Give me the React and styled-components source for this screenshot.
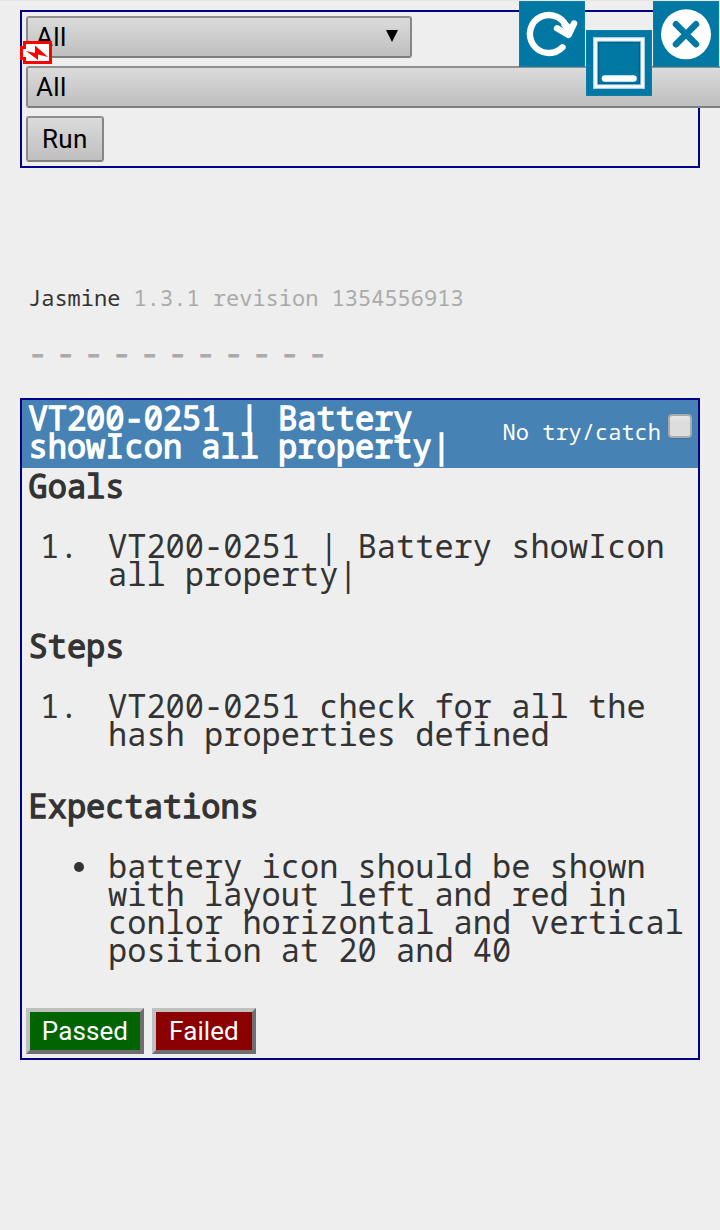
import React from 'react';
import styled, { createGlobalStyle } from 'styled-components';

const mono = `'Droid Sans Mono', 'Noto Sans Mono', 'DejaVu Sans Mono', monospace`;

const GlobalStyle = createGlobalStyle`
  body { margin: 0; background: #eee; color: #333; overflow: hidden; }
  * { box-sizing: border-box; }
`;

const Page = styled.main`
  position: relative;
  width: 720px;
  height: 1230px;
  padding: 9px 20px 0;
  overflow: hidden;
  font-family: ${mono};
  border-top: 1px solid #e6e6e6;
`;

const Panel = styled.section`
  border: 2px solid #00008b;
`;

const Filters = styled(Panel)`
  display: flex;
  flex-direction: column;
  align-items: flex-start;
  gap: 8px;
  height: 158px;
  padding: 4px;
`;

const Control = styled.button`
  display: flex;
  flex: none;
  align-items: center;
  font: 26px/30px Roboto, sans-serif;
  letter-spacing: 0.3px;
  color: #000;
  border: 2px solid;
  border-color: #8f8f8f #868686 #7e7e7e #8a8a8a;
  border-radius: 3px;
  background: linear-gradient(#dbdbdb, #bfbfbf);
`;

const SelectBox = styled(Control)`
  justify-content: space-between;
  width: ${(p) => p.$width}px;
  height: 42px;
  padding: 0 12px 0 8px;
`;

const Arrow = styled.svg`
  margin-top: -2px;
`;

const RunButton = styled(Control)`
  width: 78px;
  height: 46px;
  padding: 0 14px;
`;

const Battery = styled.svg`
  position: absolute;
  left: 20px;
  top: 39px;
`;

const WindowButton = styled.svg`
  position: absolute;
  left: ${(p) => p.$left}px;
  top: ${(p) => p.$top}px;
  width: 66px;
  height: 66px;
  background: #0078a3;
  box-shadow: inset 0 0 2px #2b8cb0;
`;

const Banner = styled.div`
  margin: 115px 0 0 8px;
  font-size: 22px;
  line-height: 28px;
  white-space: pre;
`;

const Version = styled.span`
  color: #aaa;
`;

const Pending = styled.ul`
  display: flex;
  list-style: none;
  margin: 28px 0 0 8px;
  padding: 0;
  height: 28px;
  color: #aaa;
  font-size: 32px;
  line-height: 28px;
  -webkit-text-stroke: 0.9px currentColor;
`;

const PendingItem = styled.li`
  width: 28px;
`;

const Report = styled(Panel)`
  margin-top: 31px;
  height: 662px;
  font-size: 32px;
  line-height: 28px;
`;

const Header = styled.header`
  display: flex;
  justify-content: space-between;
  height: 68px;
  padding: 4px 6px 0;
  background: #4682b4;
  color: #fff;
`;

const Title = styled.div`
  -webkit-text-stroke: 1.3px currentColor;
  white-space: nowrap;
  padding-left: 0.5px;
`;

const TryCatch = styled.label`
  display: flex;
  gap: 7px;
  padding-top: 10px;
  font-size: 22px;
  line-height: 34px;
  white-space: nowrap;
`;

const Check = styled.span`
  width: 24px;
  height: 24px;
  border: 2px solid #aaa;
  border-radius: 4px;
  background: linear-gradient(#e8e8e8, #dcdcdc 35%, #dedede);
  box-shadow: 0 1px 1px #3c74a3;
`;

const Heading = styled.h2`
  margin: 0 0 0 6.5px;
  padding-top: 4px;
  height: 64px;
  font-size: inherit;
  font-weight: normal;
  -webkit-text-stroke: 1.3px currentColor;
`;

const Item = styled.div`
  display: flex;
  height: ${(p) => p.$height}px;
  padding-left: ${(p) => p.$indent}px;
  white-space: pre;
`;

const Marker = styled.span`
  flex: none;
  width: ${(p) => p.$width}px;
`;

const Dot = styled(Marker)`
  &::before {
    content: '';
    display: block;
    width: 10px;
    height: 10px;
    margin-top: 10px;
    border-radius: 50%;
    background: #333;
  }
`;

const Actions = styled.div`
  display: flex;
  gap: 8px;
  padding-left: 4px;
`;

const Verdict = styled.button`
  height: 46px;
  width: ${(p) => p.$width}px;
  padding: 0;
  border: 4px solid;
  border-color: #c0c0c0 #6f6f6f #6f6f6f #c0c0c0;
  background: ${(p) => p.$color};
  color: #fff;
  font: 26px/30px Roboto, sans-serif;
  letter-spacing: 0.1px;
`;

export default function App() {
  return (
    <Page>
      <GlobalStyle />
      <Filters>
        <SelectBox $width={386}>
          <span>All</span>
          <Arrow width="12" height="12"><path d="M0 0H12L6 12Z" /></Arrow>
        </SelectBox>
        <SelectBox $width={760}>All</SelectBox>
        <RunButton>Run</RunButton>
      </Filters>

      <Banner>Jasmine <Version>1.3.1 revision 1354556913</Version></Banner>
      <Pending>
        {Array.from({ length: 11 }, (_, i) => <PendingItem key={i}>-</PendingItem>)}
      </Pending>

      <Report>
        <Header>
          <Title>VT200-0251 | Battery<br />showIcon all property|</Title>
          <TryCatch>No try/catch<Check /></TryCatch>
        </Header>
        <Heading>Goals</Heading>
        <Item $indent={18} $height={96}>
          <Marker $width={68}>1.</Marker>
          <span>VT200-0251 | Battery showIcon{'\n'}all property|</span>
        </Item>
        <Heading>Steps</Heading>
        <Item $indent={18} $height={96}>
          <Marker $width={68}>1.</Marker>
          <span>VT200-0251 check for all the{'\n'}hash properties defined</span>
        </Item>
        <Heading>Expectations</Heading>
        <Item $indent={52} $height={156}>
          <Dot $width={34} />
          <span>battery icon should be shown{'\n'}with layout left and red in{'\n'}conlor horizontal and vertical{'\n'}position at 20 and 40</span>
        </Item>
        <Actions>
          <Verdict $width={118} $color="#006400">Passed</Verdict>
          <Verdict $width={104} $color="#8b0000">Failed</Verdict>
        </Actions>
      </Report>

      <Battery width="32" height="25">
        <path d="M4.5 2.5H30.5V22.5H4.5V18.5H1.5V7.5H4.5Z" fill="#fff" stroke="#f00" strokeWidth="3" />
        <path d="M6 11L15 13L15 5.5L28 17L18 14.5V20Z" fill="#f00" />
      </Battery>
      <WindowButton $left={519} $top={0} viewBox="0 0 66 66">
        <g fill="none" stroke="#fff" strokeWidth="6.4" strokeLinecap="round" strokeLinejoin="round">
          <path d="M43.5 46.3A19 19 0 1 1 48.5 29" />
          <path d="M38 27.3L49.5 34L55 22.5" />
        </g>
        <path d="M42 24L49.5 35L54 26L48 21Z" fill="#fff" />
      </WindowButton>
      <WindowButton $left={586} $top={29} viewBox="0 0 66 66">
        <rect x="9.5" y="9.5" width="47" height="47" fill="none" stroke="#a9d0df" strokeWidth="5" />
        <rect x="9.5" y="9.5" width="47" height="47" fill="none" stroke="#fff" strokeWidth="2.5" />
        <rect x="12.5" y="12.5" width="41" height="41" fill="none" stroke="#006090" strokeWidth="1.5" />
        <path d="M19 48.5H47.5" stroke="#fff" strokeWidth="6.5" strokeLinecap="round" />
      </WindowButton>
      <WindowButton $left={653} $top={0} viewBox="0 0 66 66">
        <circle cx="33" cy="33.3" r="25" fill="#fff" />
        <path d="M23 23.3L43 43.3M43 23.3L23 43.3" stroke="#0078a3" strokeWidth="6.5" strokeLinecap="round" />
      </WindowButton>
    </Page>
  );
}
